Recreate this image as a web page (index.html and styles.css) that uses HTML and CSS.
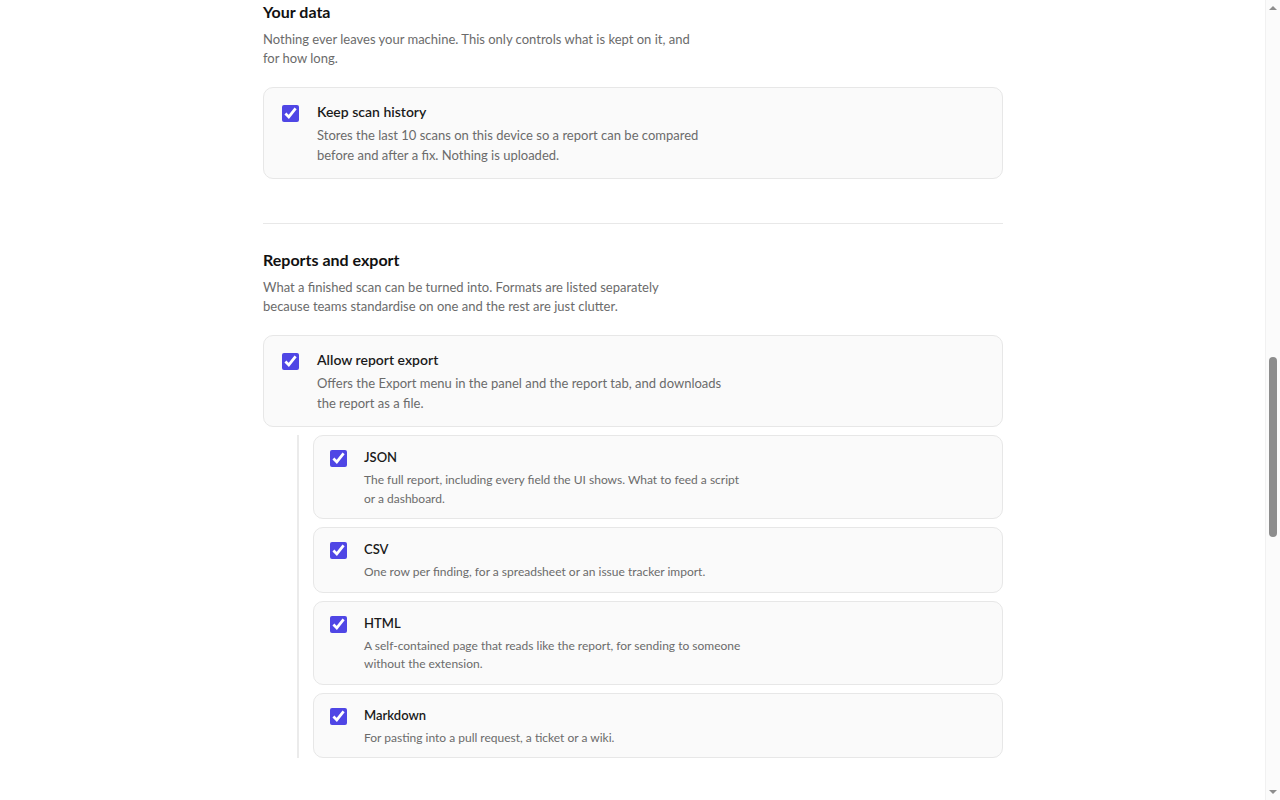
FILE: index.html
```html
<!DOCTYPE html>
<html lang="en">
<head>
    <meta charset="UTF-8">
    <meta name="viewport" content="width=device-width, initial-scale=1.0">
    <title>Settings</title>
    <link rel="stylesheet" href="styles.css">
</head>
<body>
    <main class="settings">
        <!-- Your data -->
        <section class="group">
            <h2 class="group-title">Your data</h2>
            <p class="group-desc">Nothing ever leaves your machine. This only controls what is kept on it, and for how long.</p>

            <label class="option">
                <input type="checkbox" class="option-check" checked>
                <span class="option-text">
                    <span class="option-title">Keep scan history</span>
                    <span class="option-desc">Stores the last 10 scans on this device so a report can be compared before and after a fix. Nothing is uploaded.</span>
                </span>
            </label>
        </section>

        <hr class="divider">

        <!-- Reports and export -->
        <section class="group">
            <h2 class="group-title">Reports and export</h2>
            <p class="group-desc">What a finished scan can be turned into. Formats are listed separately because teams standardise on one and the rest are just clutter.</p>

            <label class="option">
                <input type="checkbox" class="option-check" checked>
                <span class="option-text">
                    <span class="option-title">Allow report export</span>
                    <span class="option-desc">Offers the Export menu in the panel and the report tab, and downloads the report as a file.</span>
                </span>
            </label>

            <div class="suboptions">
                <label class="option option-sub">
                    <input type="checkbox" class="option-check" checked>
                    <span class="option-text">
                        <span class="option-title">JSON</span>
                        <span class="option-desc">The full report, including every field the UI shows. What to feed a script or a dashboard.</span>
                    </span>
                </label>

                <label class="option option-sub">
                    <input type="checkbox" class="option-check" checked>
                    <span class="option-text">
                        <span class="option-title">CSV</span>
                        <span class="option-desc">One row per finding, for a spreadsheet or an issue tracker import.</span>
                    </span>
                </label>

                <label class="option option-sub">
                    <input type="checkbox" class="option-check" checked>
                    <span class="option-text">
                        <span class="option-title">HTML</span>
                        <span class="option-desc">A self-contained page that reads like the report, for sending to someone without the extension.</span>
                    </span>
                </label>

                <label class="option option-sub">
                    <input type="checkbox" class="option-check" checked>
                    <span class="option-text">
                        <span class="option-title">Markdown</span>
                        <span class="option-desc">For pasting into a pull request, a ticket or a wiki.</span>
                    </span>
                </label>
            </div>
        </section>
    </main>

    <!-- Window scrollbar -->
    <div class="scrollbar" aria-hidden="true">
        <span class="scroll-arrow scroll-up"></span>
        <span class="scroll-thumb"></span>
        <span class="scroll-arrow scroll-down"></span>
    </div>
</body>
</html>
```

FILE: styles.css
```css
/* Reset */
body {
    margin: 0;
    padding: 0 14px 0 0;
    background: #fff;
    color: #141414;
    font-family: 'Lato', 'Noto Sans', sans-serif;
}

/* Page column */
.settings {
    max-width: 740px;
    margin: 0 auto;
    padding: 2px 0 40px;
}

/* Section */
.group-title {
    margin: 0 0 8px;
    font-size: 16px;
    line-height: 20px;
    font-weight: 700;
    color: #111;
}

.group-desc {
    margin: 0 0 19px;
    max-width: 430px;
    font-size: 13px;
    line-height: 19px;
    color: #6b6b6b;
}

.divider {
    border: 0;
    border-top: 1px solid #e8e8e8;
    margin: 44px 0 26px;
}

/* Option cards */
.option {
    display: flex;
    align-items: flex-start;
    gap: 18px;
    padding: 15px 18px 13px;
    background: #fafafa;
    border: 1px solid #e7e7e7;
    border-radius: 10px;
    cursor: pointer;
}

.option-check {
    flex: none;
    width: 17px;
    height: 17px;
    margin: 2px 0 0;
    accent-color: #4f46e5;
}

.option-text {
    display: flex;
    flex-direction: column;
    gap: 4px;
}

.option-title {
    font-size: 14px;
    line-height: 18px;
    font-weight: 600;
    color: #1a1a1a;
}

.option-desc {
    max-width: 410px;
    font-size: 13px;
    line-height: 20px;
    color: #6b6b6b;
}

/* Nested formats */
.suboptions {
    display: flex;
    flex-direction: column;
    gap: 8px;
    margin: 8px 0 0 34px;
    padding-left: 14px;
    border-left: 2px solid #ebebeb;
}

.option-sub {
    gap: 17px;
    padding: 12px 16px 10px;
}

.option-sub .option-title {
    font-size: 13px;
}

.option-sub .option-text {
    gap: 5px;
}

.option-sub .option-desc {
    max-width: 380px;
    font-size: 12px;
    line-height: 18.5px;
}

/* Scrollbar */
.scrollbar {
    position: fixed;
    top: 0;
    right: 0;
    width: 15px;
    height: 100vh;
    background: #fbfbfb;
    border-left: 1px solid #f1f1f1;
    box-sizing: border-box;
}

.scroll-thumb {
    position: absolute;
    top: 357px;
    left: 3px;
    width: 8px;
    height: 180px;
    border-radius: 4px;
    background: #8d8d8d;
}

.scroll-arrow {
    position: absolute;
    left: 3px;
    width: 0;
    height: 0;
    border-left: 4px solid transparent;
    border-right: 4px solid transparent;
}

.scroll-up {
    top: 6px;
    border-bottom: 4px solid #8d8d8d;
}

.scroll-down {
    bottom: 6px;
    border-top: 4px solid #8d8d8d;
}
```
